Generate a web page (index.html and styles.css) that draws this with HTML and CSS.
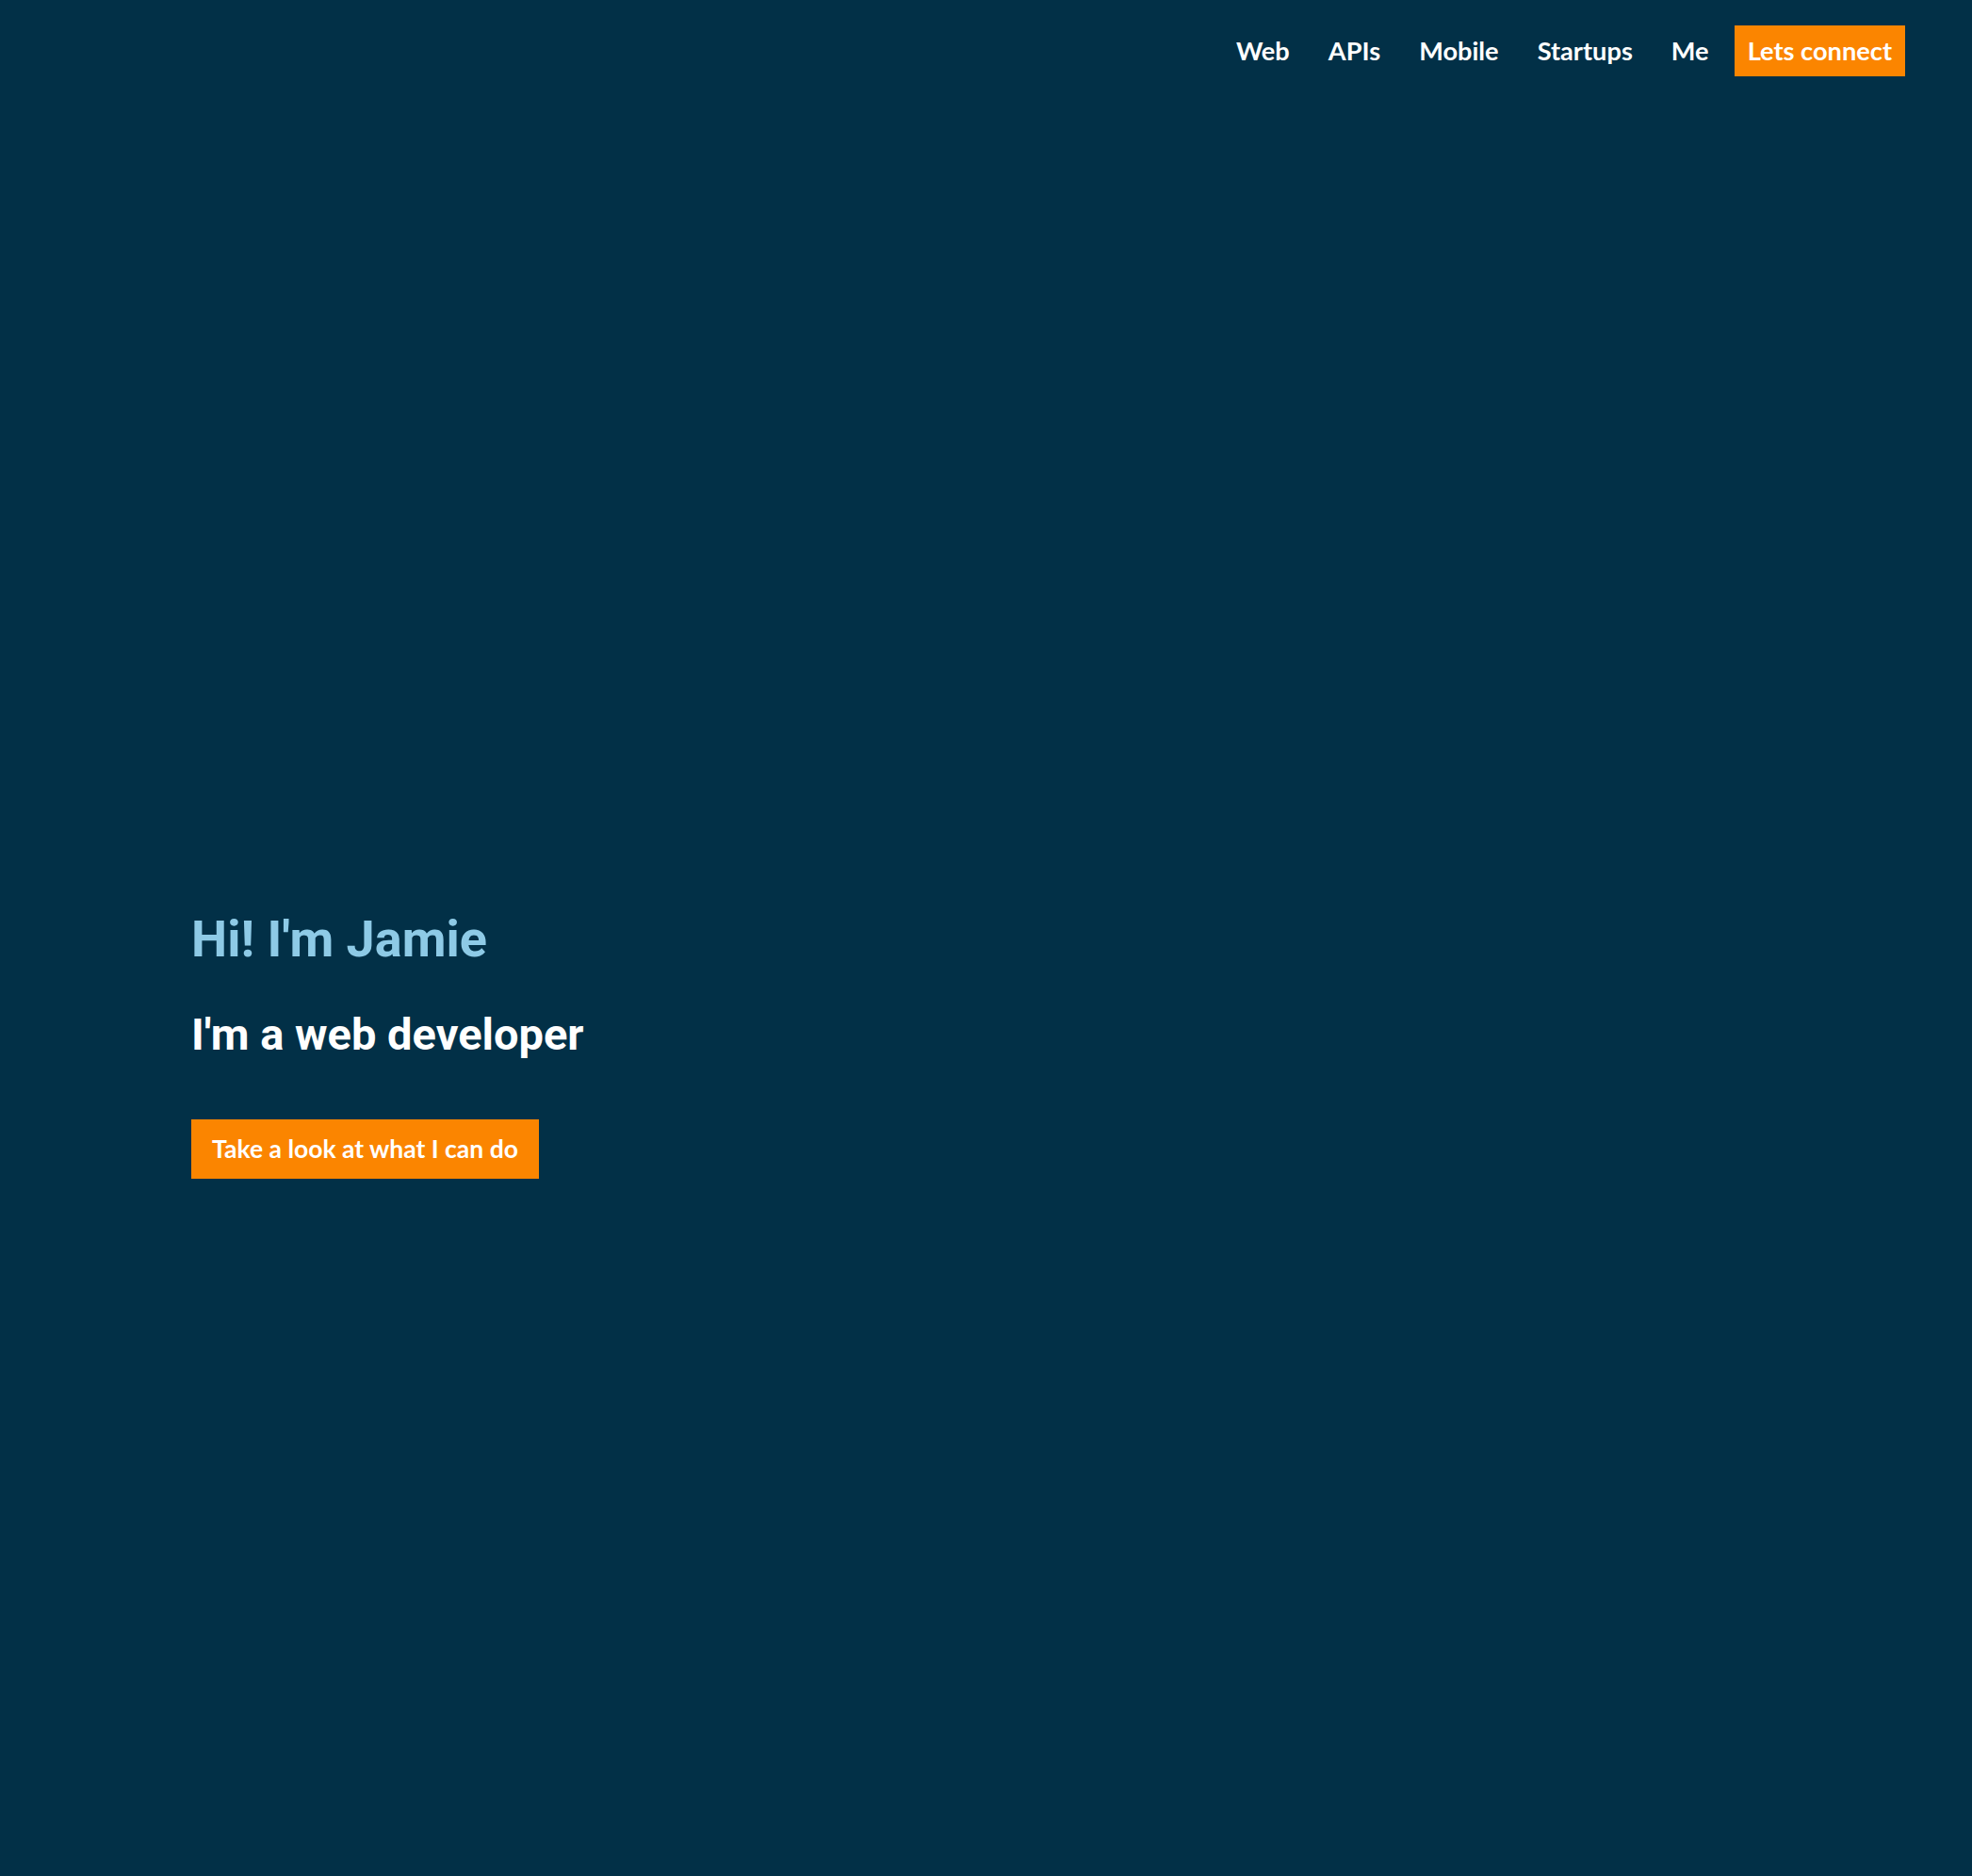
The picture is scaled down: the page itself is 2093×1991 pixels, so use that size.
FILE: index.html
```html
<!DOCTYPE html>
<html lang="en">
<head>
    <meta charset="UTF-8">
    <meta name="viewport" content="width=device-width, initial-scale=1.0">
    <title>Jamie - Web Developer</title>
    <link rel="stylesheet" href="styles.css">
</head>
<body>
    <header class="site-header">
        <nav class="nav">
            <a href="#web" class="nav-link">Web</a>
            <a href="#apis" class="nav-link">APIs</a>
            <a href="#mobile" class="nav-link">Mobile</a>
            <a href="#startups" class="nav-link">Startups</a>
            <a href="#me" class="nav-link">Me</a>
            <a href="#connect" class="nav-link nav-cta">Lets connect</a>
        </nav>
    </header>

    <section class="hero">
        <h1 class="hero-title">Hi! I'm Jamie</h1>
        <h2 class="hero-subtitle">I'm a web developer</h2>
        <a href="#web" class="btn">Take a look at what I can do</a>
    </section>
</body>
</html>
```

FILE: styles.css
```css
body {
    font-family: Lato, "Open Sans", sans-serif;
    background-color: #023047;
    color: #fff;
    margin: 0;
    padding: 0;
}
a {
    text-decoration: none;
    color: inherit;
}
.site-header {
    display: flex;
    justify-content: flex-end;
    padding: 27px 71px 0 0;
}
.nav {
    display: flex;
    gap: 13px;
}
.nav-link {
    display: block;
    height: 54px;
    line-height: 54px;
    padding: 0 14px;
    font-size: 27.2px;
    font-weight: 700;
    color: #fff;
}
.nav-cta {
    background-color: #fb8500;
}
.hero {
    min-height: 1910px;
    padding: 884px 0 0 203px;
    box-sizing: border-box;
}
.hero-title {
    font-family: Roboto, sans-serif;
    font-size: 54px;
    line-height: 1.2;
    font-weight: 700;
    color: #8ecae6;
    margin: 0;
}
.hero-subtitle {
    font-family: Roboto, sans-serif;
    font-size: 47px;
    line-height: 1.2;
    font-weight: 700;
    color: #fff;
    margin: 40px 0 0;
}
.btn {
    display: inline-block;
    margin-top: 62px;
    height: 63px;
    line-height: 63px;
    padding: 0 22px;
    font-size: 26.5px;
    font-weight: 700;
    background-color: #fb8500;
    color: #fff;
}
```
